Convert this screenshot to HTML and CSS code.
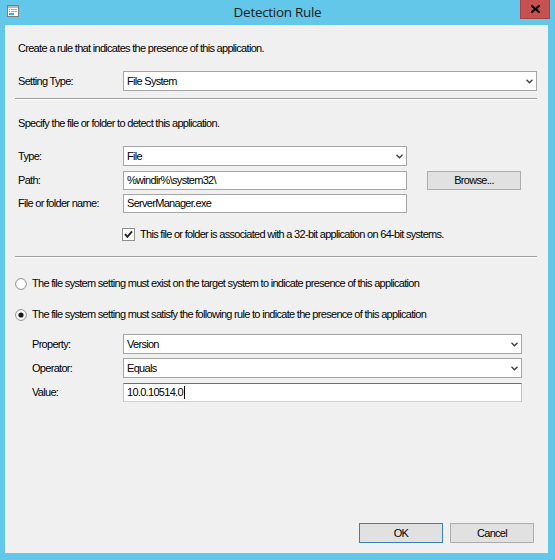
FILE: index.html
```html
<!DOCTYPE html>
<html>
<head>
<meta charset="utf-8">
<title>Detection Rule</title>
<link rel="stylesheet" href="styles.css">
</head>
<body>
<div class="window">
  <div class="titlebar">
    <svg class="app-icon" width="12" height="12" viewBox="0 0 12 12">
      <rect x="0.5" y="0.5" width="11" height="11" fill="#ffffff" stroke="#7d7d7d"/>
      <rect x="1" y="1" width="10" height="2" fill="#b9b9b9"/>
      <rect x="2" y="4" width="1" height="1" fill="#8a8a8a"/>
      <rect x="4" y="4" width="6" height="1" fill="#b0b0b0"/>
      <rect x="2" y="6" width="1" height="1" fill="#8a8a8a"/>
      <rect x="4" y="6" width="6" height="1" fill="#b0b0b0"/>
      <rect x="2" y="8" width="5" height="2" fill="#35a8e0"/>
    </svg>
    <div class="title">Detection Rule</div>
    <div class="close">
      <svg width="9" height="8" viewBox="0 0 9 8">
        <path d="M1 1 L8 7 M8 1 L1 7" stroke="#000" stroke-width="2" stroke-linecap="square"/>
      </svg>
    </div>
  </div>
  <div class="client">
    <div class="text">Create a rule that indicates the presence of this application.</div>
    <div class="row row-setting">
      <div class="label">Setting Type:</div>
      <div class="field select grow"><span>File System</span><svg class="chev" width="7" height="5" viewBox="0 0 7 5"><path d="M0.5 0.8 L3.5 3.8 L6.5 0.8" fill="none" stroke="#404040" stroke-width="1.4"/></svg></div>
    </div>
    <div class="sep"></div>
    <div class="text text-specify">Specify the file or folder to detect this application.</div>
    <div class="row row-type">
      <div class="label">Type:</div>
      <div class="field select w-mid"><span>File</span><svg class="chev" width="7" height="5" viewBox="0 0 7 5"><path d="M0.5 0.8 L3.5 3.8 L6.5 0.8" fill="none" stroke="#404040" stroke-width="1.4"/></svg></div>
    </div>
    <div class="row row-path">
      <div class="label">Path:</div>
      <div class="field input w-mid"><span>%windir%\system32\</span></div>
      <div class="button browse">Browse...</div>
    </div>
    <div class="row row-name">
      <div class="label">File or folder name:</div>
      <div class="field input w-mid"><span>ServerManager.exe</span></div>
    </div>
    <div class="row row-check">
      <svg class="checkbox" width="13" height="13" viewBox="0 0 13 13">
        <rect x="0.5" y="0.5" width="12" height="12" fill="#ffffff" stroke="#8e8f8f"/>
        <path d="M3 6.2 L5.4 8.8 L10 3.4" fill="none" stroke="#1f1f1f" stroke-width="1.9"/>
      </svg>
      <span class="check-text">This file or folder is associated with a 32-bit application on 64-bit systems.</span>
    </div>
    <div class="sep sep2"></div>
    <div class="row row-radio1">
      <svg class="radio" width="12" height="12" viewBox="0 0 12 12">
        <circle cx="6" cy="6" r="5.4" fill="#ffffff" stroke="#8e8f8f"/>
      </svg>
      <span class="radio-text">The file system setting must exist on the target system to indicate presence of this application</span>
    </div>
    <div class="row row-radio2">
      <svg class="radio" width="12" height="12" viewBox="0 0 12 12">
        <circle cx="6" cy="6" r="5.4" fill="#ffffff" stroke="#8e8f8f"/>
        <circle cx="6" cy="6" r="2.6" fill="#1a1a1a"/>
      </svg>
      <span class="radio-text">The file system setting must satisfy the following rule to indicate the presence of this application</span>
    </div>
    <div class="rule">
      <div class="row row-prop">
        <div class="label label-sub">Property:</div>
        <div class="field select grow"><span>Version</span><svg class="chev" width="7" height="5" viewBox="0 0 7 5"><path d="M0.5 0.8 L3.5 3.8 L6.5 0.8" fill="none" stroke="#404040" stroke-width="1.4"/></svg></div>
      </div>
      <div class="row row-op">
        <div class="label label-sub">Operator:</div>
        <div class="field select grow"><span>Equals</span><svg class="chev" width="7" height="5" viewBox="0 0 7 5"><path d="M0.5 0.8 L3.5 3.8 L6.5 0.8" fill="none" stroke="#404040" stroke-width="1.4"/></svg></div>
      </div>
      <div class="row row-val">
        <div class="label label-sub">Value:</div>
        <div class="field input focused grow"><span>10.0.10514.0</span><span class="caret"></span></div>
      </div>
    </div>
    <div class="actions">
      <div class="button default">OK</div>
      <div class="button">Cancel</div>
    </div>
  </div>
</div>
</body>
</html>
```
FILE: styles.css
```css
* { box-sizing: border-box; }
html, body { margin: 0; padding: 0; }
body {
  width: 555px;
  height: 560px;
  overflow: hidden;
  font-family: "Liberation Sans", Arial, sans-serif;
  font-size: 11px;
  letter-spacing: -0.7px;
  color: #000;
}
.window {
  width: 555px;
  height: 560px;
  background: #63c7ea;
  display: flex;
  flex-direction: column;
}
.titlebar {
  height: 25px;
  flex: none;
  display: grid;
  grid-template-columns: 1fr auto 1fr;
}
.app-icon { margin: 5px 0 0 7px; }
.title {
  font-family: "Open Sans", "Noto Sans", sans-serif;
  font-size: 13.5px;
  letter-spacing: -0.3px;
  line-height: 24px;
  color: #1b1b1b;
}
.close {
  justify-self: end;
  margin-right: 5px;
  width: 30px;
  height: 19px;
  background: #c75050;
  border: 1px solid #a64242;
  border-top: none;
  display: flex;
  align-items: center;
  justify-content: center;
}
.client {
  margin: 0 7px 7px 5px;
  height: 528px;
  background: #f0f0f0;
  display: flex;
  flex-direction: column;
  padding: 17px 11px 10px 13px;
}
.text { line-height: 13px; white-space: nowrap; }
.row { display: flex; align-items: center; white-space: nowrap; }
.label { width: 105px; flex: none; line-height: 13px; }
.field {
  height: 20px;
  border: 1px solid #a5a5a5;
  background: #fff;
  display: flex;
  align-items: center;
  padding: 0 3px;
  line-height: 13px;
}
.field.input { height: 19px; }
.grow { flex: 1; }
.w-mid { width: 284px; flex: none; }
.chev { margin-left: auto; margin-right: 0; flex: none; }
.row-setting { margin-top: 16px; }
.sep {
  margin: 7px 0 0 -3px;
  height: 2px;
  border-top: 1px solid #a0a0a0;
  border-bottom: 1px solid #ffffff;
  flex: none;
}
.text-specify { margin-top: 17px; }
.row-type { margin-top: 16px; }
.row-path { margin-top: 5px; }
.row-name { margin-top: 4px; }
.button {
  width: 84px;
  height: 20px;
  background: #e1e1e1;
  border: 1px solid #adadad;
  display: flex;
  align-items: center;
  justify-content: center;
  line-height: 13px;
}
.button.default { border-color: #3c7fb1; }
.browse { width: 94px; height: 19px; margin-left: 20px; }
.row-check { margin-top: 15px; margin-left: 104px; height: 13px; }
.checkbox { flex: none; margin-right: 5px; }
.check-text { line-height: 13px; }
.sep2 { margin-top: 15px; }
.radio { flex: none; margin-right: 5px; }
.radio-text { line-height: 13px; }
.row-radio1 { margin-top: 19px; margin-left: -3px; height: 13px; }
.row-radio2 { margin-top: 18px; margin-left: -3px; height: 13px; }
.rule { padding-left: 14px; margin-right: 15px; margin-top: 13px; }
.label-sub { width: 91px; }
.row-op { margin-top: 4px; }
.row-val { margin-top: 5px; }
.focused {
  border-color: #a4c9e3 #a4c9e3 #b7d9ed #a4c9e3;
  border-top-color: #3d7bad;
}
.caret {
  width: 1px;
  height: 13px;
  background: #000;
  margin-left: 1px;
}
.actions {
  margin-top: auto;
  display: flex;
  justify-content: flex-end;
  gap: 7px;
  padding-right: 3px;
}
```
